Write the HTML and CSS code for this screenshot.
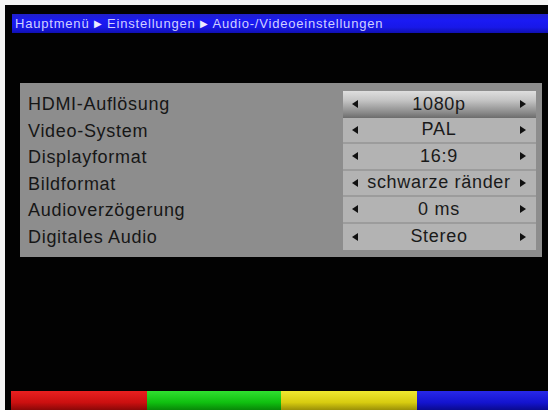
FILE: index.html
```html
<!DOCTYPE html>
<html lang="de">
<head>
<meta charset="utf-8">
<title>Audio-/Videoeinstellungen</title>
<link rel="stylesheet" href="styles.css">
</head>
<body>
<div class="screen">
  <div class="titlebar">Hauptmenü <span class="sep">&#9654;</span> Einstellungen <span class="sep">&#9654;</span> Audio-/Videoeinstellungen</div>
  <div class="panel">
    <div class="labels">
      <div class="label">HDMI-Auflösung</div>
      <div class="label">Video-System</div>
      <div class="label">Displayformat</div>
      <div class="label">Bildformat</div>
      <div class="label">Audioverzögerung</div>
      <div class="label">Digitales Audio</div>
    </div>
    <div class="values">
      <div class="value selected"><span class="arrow left"></span><span class="vtext">1080p</span><span class="arrow right"></span></div>
      <div class="value"><span class="arrow left"></span><span class="vtext">PAL</span><span class="arrow right"></span></div>
      <div class="value"><span class="arrow left"></span><span class="vtext">16:9</span><span class="arrow right"></span></div>
      <div class="value"><span class="arrow left"></span><span class="vtext">schwarze ränder</span><span class="arrow right"></span></div>
      <div class="value"><span class="arrow left"></span><span class="vtext">0 ms</span><span class="arrow right"></span></div>
      <div class="value"><span class="arrow left"></span><span class="vtext">Stereo</span><span class="arrow right"></span></div>
    </div>
  </div>
  <div class="spacer"></div>
  <div class="colorbar">
    <div class="key red"></div>
    <div class="key green"></div>
    <div class="key yellow"></div>
    <div class="key blue"></div>
  </div>
</div>
</body>
</html>
```
FILE: styles.css
```css
html, body {
  margin: 0;
  padding: 0;
  background: #f4f4f4;
  width: 548px;
  height: 410px;
  overflow: hidden;
}
.screen {
  margin: 5px 0 0 5px;
  width: 543px;
  height: 405px;
  background: #020202;
  display: flex;
  flex-direction: column;
  font-family: "Liberation Sans", Arial, sans-serif;
}
.titlebar {
  margin: 9px 0 0 7px;
  height: 19px;
  background: linear-gradient(#2020c8, #1a1af4 35%, #1818e8 70%, #1010b0);
  color: #d0d0ff;
  font-size: 13px;
  line-height: 19px;
  letter-spacing: 0.8px;
  padding-left: 3px;
  white-space: nowrap;
}
.titlebar .sep {
  font-size: 10px;
  color: #ececff;
  vertical-align: 1px;
}
.panel {
  margin: 50px 0 0 15px;
  width: 522px;
  height: 174px;
  box-sizing: border-box;
  padding: 8px 6px 7px 8px;
  background: #8d8d8d;
  display: flex;
  justify-content: space-between;
}
.labels {
  display: flex;
  flex-direction: column;
}
.label {
  height: 26.5px;
  line-height: 26.5px;
  font-size: 18px;
  color: #161616;
  letter-spacing: 0.7px;
}
.values {
  width: 193px;
  display: flex;
  flex-direction: column;
}
.value {
  height: 26.5px;
  box-sizing: border-box;
  background: #b3b3b3;
  border-bottom: 2px solid #9c9c9c;
  display: flex;
  align-items: center;
  justify-content: space-between;
  padding: 0 10px 0 9px;
}
.value:last-child {
  border-bottom: none;
}
.value.selected {
  background: linear-gradient(#dedede, #c4c4c4 35%, #8a8a8a 80%, #6c6c6c);
  border-bottom: none;
}
.vtext {
  font-size: 18px;
  color: #1a1a1a;
  letter-spacing: 0.7px;
}
.arrow {
  width: 0;
  height: 0;
  border-top: 4px solid transparent;
  border-bottom: 4px solid transparent;
}
.arrow.left {
  border-right: 6px solid #111;
}
.arrow.right {
  border-left: 6px solid #111;
}
.spacer {
  flex: 1;
}
.colorbar {
  margin-left: 6px;
  height: 19px;
  display: flex;
}
.key {
  height: 100%;
}
.red {
  width: 136px;
  background: linear-gradient(#e82020, #cc1010 60%, #8a0808);
}
.green {
  width: 134px;
  background: linear-gradient(#30e030, #10c010 60%, #088808);
}
.yellow {
  width: 136px;
  background: linear-gradient(#f0e830, #d8cc10 60%, #9a9008);
}
.blue {
  flex: 1;
  background: linear-gradient(#2828e8, #1414d0 60%, #0a0a90);
}
```
